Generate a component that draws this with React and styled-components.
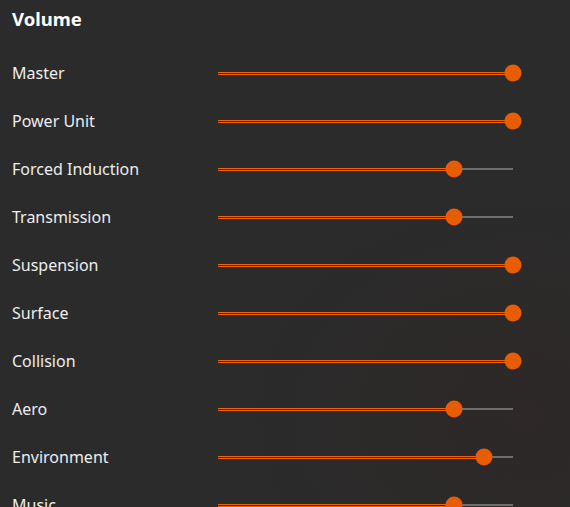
import React from 'react'
import styled, { createGlobalStyle } from 'styled-components'

const Global = createGlobalStyle`
    html, body {
        margin: 0;
        padding: 0;
        background: #2b2b2b;
    }
`

const Page = styled.div`
    width: 570px;
    height: 507px;
    overflow: hidden;
    background: radial-gradient(ellipse at 92% 82%, #2e2828 0%, #2b2b2b 40%), #2b2b2b;
    font-family: "Noto Sans", "Open Sans", sans-serif;
    color: #ededed;
    padding: 0 12px;
    box-sizing: border-box;
`
const Title = styled.h2`
    margin: 0;
    height: 38px;
    line-height: 38px;
    font-size: 18.5px;
    font-weight: 700;
    color: #fff;
`
const List = styled.div`
    padding-top: 11px;
`
const Row = styled.div`
    display: flex;
    align-items: center;
    height: 48px;
`
const Label = styled.div`
    width: 206px;
    flex: none;
    font-size: 16px;
    line-height: 20px;
`
const Slider = styled.div`
    position: relative;
    width: 295px;
    height: 4px;
    display: flex;
    align-items: center;
`
const Fill = styled.div`
    flex: none;
    display: flex;
    flex-direction: column;
    gap: 1px;
`
const Line = styled.div`
    height: 1px;
    background: #f06408;
`
const Rest = styled.div`
    flex: 1;
    height: 2px;
    background: #6e6e6e;
`
const Thumb = styled.div`
    position: absolute;
    top: 50%;
    width: 17px;
    height: 17px;
    border-radius: 50%;
    background: #e85d04;
    transform: translate(-50%, -50%);
`

const rows = [
    ['Master', 1],
    ['Power Unit', 1],
    ['Forced Induction', 0.8],
    ['Transmission', 0.8],
    ['Suspension', 1],
    ['Surface', 1],
    ['Collision', 1],
    ['Aero', 0.8],
    ['Environment', 0.9],
    ['Music', 0.8],
]

const App = () => {
    return (
        <Page>
            <Global />
            <Title>Volume</Title>
            <List>
                {rows.map(([name, v]) => (
                    <Row key={name}>
                        <Label>{name}</Label>
                        <Slider>
                            <Fill style={{ width: `${v * 100}%` }}>
                                <Line />
                                <Line />
                            </Fill>
                            <Rest />
                            <Thumb style={{ left: `${v * 100}%` }} />
                        </Slider>
                    </Row>
                ))}
            </List>
        </Page>
    )
}

export default App
